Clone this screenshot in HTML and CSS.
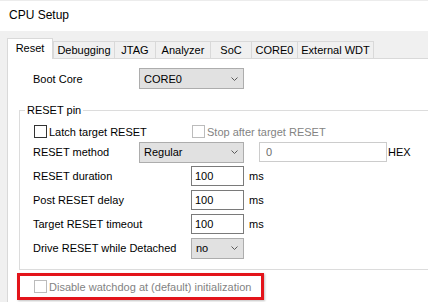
FILE: index.html
```html
<!DOCTYPE html>
<html lang="en">
<head>
    <meta charset="UTF-8">
    <meta name="viewport" content="width=device-width, initial-scale=1.0">
    <title>CPU Setup</title>
    <link rel="stylesheet" href="styles.css">
</head>
<body>

<div class="titlebar">CPU Setup</div>

<div class="dialog">
    <div class="tabs">
        <div class="tab active tab-reset">Reset</div>
        <div class="tab tab-debug">Debugging</div>
        <div class="tab tab-jtag">JTAG</div>
        <div class="tab tab-analyzer">Analyzer</div>
        <div class="tab tab-soc">SoC</div>
        <div class="tab tab-core">CORE0</div>
        <div class="tab tab-wdt last">External WDT</div>
    </div>

    <div class="panel">
        <div class="row boot">
            <span class="label label-short">Boot Core</span>
            <div class="combo combo-wide">
                <span>CORE0</span>
                <svg width="7" height="4" viewBox="0 0 7 4"><polyline points="0.5,0.5 3.5,3.5 6.5,0.5"/></svg>
            </div>
        </div>

        <fieldset class="group">
            <legend>RESET pin</legend>

            <div class="row checks">
                <label class="check check-first"><span class="box"></span>Latch target RESET</label>
                <label class="check disabled"><span class="box"></span>Stop after target RESET</label>
            </div>

            <div class="row">
                <span class="label label-short">RESET method</span>
                <div class="combo combo-wide">
                    <span>Regular</span>
                    <svg width="7" height="4" viewBox="0 0 7 4"><polyline points="0.5,0.5 3.5,3.5 6.5,0.5"/></svg>
                </div>
                <input class="field field-hex" type="text" value="0" readonly>
                <span class="unit hex">HEX</span>
            </div>

            <div class="row">
                <span class="label label-long">RESET duration</span>
                <input class="field field-ms" type="text" value="100" readonly>
                <span class="unit">ms</span>
            </div>

            <div class="row">
                <span class="label label-long">Post RESET delay</span>
                <input class="field field-ms" type="text" value="100" readonly>
                <span class="unit">ms</span>
            </div>

            <div class="row">
                <span class="label label-long">Target RESET timeout</span>
                <input class="field field-ms" type="text" value="100" readonly>
                <span class="unit">ms</span>
            </div>

            <div class="row">
                <span class="label label-long">Drive RESET while Detached</span>
                <div class="combo combo-narrow">
                    <span>no</span>
                    <svg width="7" height="4" viewBox="0 0 7 4"><polyline points="0.5,0.5 3.5,3.5 6.5,0.5"/></svg>
                </div>
            </div>
        </fieldset>

        <div class="highlight">
            <label class="check disabled"><span class="box"></span>Disable watchdog at (default) initialization</label>
        </div>
    </div>
</div>

</body>
</html>
```

FILE: styles.css
```css
body {
    font-family: "Liberation Sans", Arial, sans-serif;
    font-size: 11px;
    color: #000;
    background-color: #f0f0f0;
    margin: 0;
    width: 428px;
    height: 302px;
    overflow: hidden;
}
.titlebar {
    height: 31px;
    box-sizing: border-box;
    background: white;
    border-top: 1px solid #ececec;
    padding-left: 9px;
    font-size: 12px;
    line-height: 29px;
}
.dialog {
    padding: 7px 0 0 7px;
}
.tabs {
    display: flex;
    align-items: flex-end;
    height: 20px;
}
.tab {
    box-sizing: border-box;
    height: 17px;
    line-height: 16px;
    text-align: center;
    background: #f0f0f0;
    border: 1px solid #d9d9d9;
    border-right: none;
    border-bottom: none;
}
.tab.last {
    border-right: 1px solid #d9d9d9;
}
.tab.active {
    position: relative;
    z-index: 1;
    height: 21px;
    line-height: 19px;
    margin-bottom: -1px;
    background: white;
    border-right: 1px solid #d9d9d9;
}
.tab-reset { width: 46px; }
.tab-debug { width: 61px; }
.tab-jtag { width: 41px; }
.tab-analyzer { width: 55px; }
.tab-soc { width: 41px; }
.tab-core { width: 46px; }
.tab-wdt { width: 77px; }

.panel {
    background: white;
    border-top: 1px solid #d9d9d9;
    border-left: 1px solid #d9d9d9;
    height: 243px;
    overflow: hidden;
}
.row {
    display: flex;
    align-items: center;
    height: 24px;
}
.row.boot {
    height: 21px;
    margin-top: 9px;
    padding-left: 25px;
}
.label {
    flex: none;
}
.label-short { width: 106px; }
.label-long { width: 158px; }

.combo {
    box-sizing: border-box;
    height: 21px;
    display: flex;
    align-items: center;
    justify-content: space-between;
    padding: 0 5px 0 4px;
    background: #e1e1e1;
    border: 1px solid #adadad;
}
.combo svg {
    fill: none;
    stroke: #5a5a5a;
    stroke-width: 1;
}
.combo-wide { width: 105px; }
.combo-narrow { width: 53px; }

.field {
    box-sizing: border-box;
    height: 20px;
    margin: 0;
    padding: 0 3px;
    font: inherit;
    color: #000;
    background: white;
    border: 1px solid #7a7a7a;
    outline: none;
}
.field-ms { width: 53px; }
.field-hex {
    width: 128px;
    margin-left: 15px;
    padding-left: 6px;
    color: #6d6d6d;
    border-color: #cccccc;
}
.unit {
    margin-left: 5px;
}
.unit.hex {
    margin-left: 1px;
}

.group {
    box-sizing: border-box;
    margin: 15px 0 0 11px;
    padding: 0 0 9px 13px;
    width: 409px;
    border: 1px solid #dcdcdc;
    border-right: none;
}
.group legend {
    margin-left: -8px;
    padding: 0 2px;
    line-height: 13px;
}
.row.checks {
    height: 17px;
    padding-top: 6px;
}
.check {
    display: flex;
    align-items: center;
}
.check-first {
    width: 158px;
}
.box {
    box-sizing: border-box;
    width: 13px;
    height: 13px;
    margin: 0 2px 0 1px;
    background: white;
    border: 1px solid #333333;
}
.check.disabled {
    color: #838383;
}
.check.disabled .box {
    border-color: #bcbcbc;
}

.highlight {
    margin: 3px 0 0 9px;
    width: 247px;
    height: 27px;
    box-sizing: border-box;
    border: 3px solid #e3141b;
    box-shadow: 1px 1px 2px rgba(0, 0, 0, 0.25);
    padding-left: 13px;
    display: flex;
    align-items: center;
}
```
